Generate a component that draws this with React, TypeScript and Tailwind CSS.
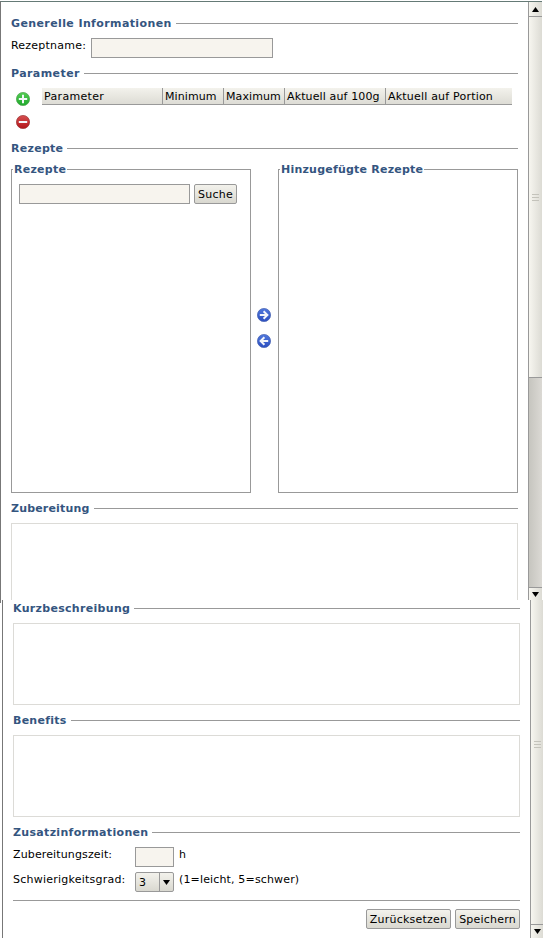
import type { ReactNode } from "react";

function Heading({ children, className = "" }: { children: ReactNode; className?: string }) {
  return (
    <div className="flex h-[17px] w-full shrink-0 items-center">
      <h2 className={`whitespace-nowrap text-[11px] font-bold leading-[17px] text-[#34557f] ${className}`}>{children}</h2>
      <div className="ml-1 h-px grow bg-[#999]" />
    </div>
  );
}

function Button({ children, className = "" }: { children: ReactNode; className?: string }) {
  return (
    <button
      className={`flex h-5 shrink-0 items-center justify-center whitespace-nowrap rounded-[2px] border border-[#999] bg-gradient-to-b from-[#f3f2ec] to-[#d9d8d0] leading-none ${className}`}
    >
      {children}
    </button>
  );
}

function Round({ kind }: { kind: "plus" | "minus" | "right" | "left" }) {
  const tones = {
    plus: ["#55cc55", "#1fa82c", "#4aa34c"],
    minus: ["#d65050", "#b3141a", "#9a3434"],
    right: ["#5078dc", "#2c4fc0", "#4560b0"],
    left: ["#5078dc", "#2c4fc0", "#4560b0"],
  }[kind];
  const marks = {
    plus: "M7 2.8v8.4M2.8 7h8.4",
    minus: "M2.8 7h8.4",
    right: "M2.8 7h7M6.6 3.2L10.4 7L6.6 10.8",
    left: "M11.2 7h-7M7.4 3.2L3.6 7L7.4 10.8",
  };
  return (
    <svg width="14" height="14" viewBox="0 0 14 14" className="block shrink-0">
      <defs>
        <linearGradient id={kind} x1="0" y1="0" x2="0" y2="1">
          <stop offset="0" stopColor={tones[0]} />
          <stop offset="1" stopColor={tones[1]} />
        </linearGradient>
      </defs>
      <circle cx="7" cy="7" r="6.6" fill={`url(#${kind})`} stroke={tones[2]} strokeWidth=".7" />
      <path d={marks[kind]} fill="none" stroke="#f4f6fa" strokeWidth="2" />
    </svg>
  );
}

function Grip() {
  return (
    <div className="flex w-[7px] flex-col gap-[2px]">
      <div className="h-px bg-[#c4c3bb]" />
      <div className="h-px bg-[#c4c3bb]" />
      <div className="h-px bg-[#c4c3bb]" />
    </div>
  );
}

function Arrow({ up = false }: { up?: boolean }) {
  return (
    <svg width="7" height="5" viewBox="0 0 7 5" className="block">
      <path d={up ? "M3.5 0L7 5H0z" : "M0 0h7L3.5 5z"} fill="#000" />
    </svg>
  );
}

function Legend({ children, className = "" }: { children: ReactNode; className?: string }) {
  return (
    <legend className={`ml-px whitespace-nowrap px-px text-[11px] font-bold leading-[15px] text-[#34557f] ${className}`}>
      {children}
    </legend>
  );
}

const columns = [
  { label: "Parameter", style: "w-[121px] border-r tracking-[0.33px]" },
  { label: "Minimum", style: "w-[61px] border-r tracking-[0.1px]" },
  { label: "Maximum", style: "w-[61px] border-r tracking-[0.1px]" },
  { label: "Aktuell auf 100g", style: "w-[101px] border-r tracking-[0.13px]" },
  { label: "Aktuell auf Portion", style: "w-[126px] tracking-[0.2px]" },
];

const thumb = "bg-gradient-to-r from-[#f7f6f0] to-[#dcdbd4]";

export default function App() {
  return (
    <div className="h-[944px] w-[552px] overflow-hidden bg-white font-['Verdana','DejaVu_Sans',sans-serif] text-[11px] text-black">
      <div className="flex h-[600px] w-[542px] flex-col pt-px">
        <div className="flex h-[599px] border-l border-t border-l-[#777] border-t-[#657a76]">
          <main className="flex w-[517px] shrink-0 flex-col pl-[10px] pt-[13px]">
            <Heading className="tracking-[0.39px]">Generelle Informationen</Heading>
            <div className="mt-[6px] flex h-5">
              <label className="w-20 whitespace-nowrap leading-[15px] tracking-[0.22px]">Rezeptname:</label>
              <div className="h-5 w-[182px] border border-[#999] bg-[#f7f4ee]" />
            </div>
            <div className="mt-[7px] flex">
              <Heading className="tracking-[0.42px]">Parameter</Heading>
            </div>
            <div className="mt-[6px] flex h-[52px]">
              <div className="flex w-[31px] flex-col gap-[9px] pl-[5px] pt-[4px]">
                <Round kind="plus" />
                <Round kind="minus" />
              </div>
              <div className="flex h-[17px] w-[470px] border-b border-[#999] bg-gradient-to-b from-[#f3f2ec] to-[#dddcd5]">
                {columns.map((c) => (
                  <div key={c.label} className={`shrink-0 whitespace-nowrap border-[#999] pl-[2px] leading-[17px] ${c.style}`}>
                    {c.label}
                  </div>
                ))}
              </div>
            </div>
            <Heading className="tracking-[0.28px]">Rezepte</Heading>
            <div className="mt-[5px] flex h-[331px]">
              <fieldset className="h-[331px] w-[240px] border border-[#999]">
                <Legend className="tracking-[0.25px]">Rezepte</Legend>
                <div className="mt-[7px] flex gap-1 pl-[7px]">
                  <div className="h-5 w-[171px] border border-[#999] bg-[#f7f4ee]" />
                  <Button className="w-[43px] tracking-[0.25px]">Suche</Button>
                </div>
              </fieldset>
              <div className="flex w-[27px] flex-col gap-3 pl-[6px] pt-[146px]">
                <Round kind="right" />
                <Round kind="left" />
              </div>
              <fieldset className="h-[331px] w-[240px] border border-[#999]">
                <Legend className="tracking-[0.22px]">Hinzugefügte Rezepte</Legend>
              </fieldset>
            </div>
            <div className="mt-[7px] flex">
              <Heading className="tracking-[0.18px]">Zubereitung</Heading>
            </div>
            <div className="mt-[6px] h-[77px] border border-b-0 border-[#dcdbd7]" />
          </main>
          <aside className="ml-[10px] flex w-[14px] shrink-0 flex-col border-l border-[#999]">
            <div className={`flex h-[15px] items-center justify-center border-b border-[#999] ${thumb}`}>
              <Arrow up />
            </div>
            <div className={`flex h-[361px] items-center justify-center border-b border-[#999] ${thumb}`}>
              <Grip />
            </div>
            <div className="h-[210px] border-b border-[#999] bg-gradient-to-r from-[#c6c5bf] to-[#dbd9d4]" />
            <div className={`flex grow items-center justify-center ${thumb}`}>
              <Arrow />
            </div>
          </aside>
        </div>
      </div>

      <div className="flex h-[338px]">
        <div className="h-[3px] w-[2px] border-l border-[#777]" />
        <div className="flex w-[541px] border-l border-[#777]">
          <main className="flex w-[517px] shrink-0 flex-col pl-[10px]">
            <Heading className="tracking-[0.31px]">Kurzbeschreibung</Heading>
            <div className="mt-[6px] h-[82px] border border-[#dcdbd7]" />
            <div className="mt-[7px] flex">
              <Heading className="tracking-[0.25px]">Benefits</Heading>
            </div>
            <div className="mt-[6px] h-[82px] border border-[#dcdbd7]" />
            <div className="mt-[7px] flex">
              <Heading className="tracking-[0.32px]">Zusatzinformationen</Heading>
            </div>
            <div className="mt-[6px] flex h-5">
              <label className="w-[122px] whitespace-nowrap leading-[15px] tracking-[0.13px]">Zubereitungszeit:</label>
              <div className="mr-[5px] h-5 w-[39px] border border-[#999] bg-[#f7f4ee]" />
              <span className="leading-[15px]">h</span>
            </div>
            <div className="mt-[5px] flex h-5">
              <label className="w-[122px] whitespace-nowrap leading-[15px] tracking-[0.23px]">Schwierigkeitsgrad:</label>
              <div className="mr-[5px] flex h-5 w-[39px] rounded-[2px] border border-[#999] bg-gradient-to-b from-[#f3f2ec] to-[#d9d8d0]">
                <span className="w-[24px] border-r border-[#999] pl-[3px] leading-[19px]">3</span>
                <span className="flex grow items-center justify-center">
                  <Arrow />
                </span>
              </div>
              <span className="whitespace-nowrap leading-[15px] tracking-[0.15px]">(1=leicht, 5=schwer)</span>
            </div>
            <div className="mt-[8px] h-px bg-[#999]" />
            <div className="mt-[8px] flex justify-end gap-1">
              <Button className="w-[85px] tracking-[0.22px]">Zurücksetzen</Button>
              <Button className="w-[65px] tracking-[0.2px]">Speichern</Button>
            </div>
          </main>
          <aside className="ml-[10px] flex w-[13px] shrink-0 flex-col border-l border-[#999]">
            <div className={`flex h-[325px] justify-center border-b border-[#999] pt-[141px] ${thumb}`}>
              <Grip />
            </div>
            <div className={`flex grow items-center justify-center ${thumb}`}>
              <Arrow />
            </div>
          </aside>
        </div>
      </div>
    </div>
  );
}
